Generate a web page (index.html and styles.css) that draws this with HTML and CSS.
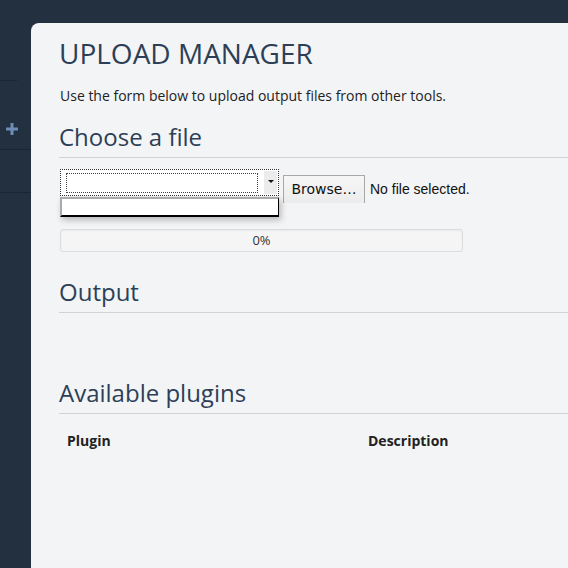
FILE: index.html
```html
<!DOCTYPE html>
<html>
<head>
<meta charset="utf-8">
<link rel="stylesheet" href="styles.css">
</head>
<body>
<div class="app">
  <aside class="sidebar">
    <div class="sb-top"></div>
    <div class="sb-add">
      <svg width="12" height="12" viewBox="0 0 12 12"><path d="M4.5 0h3v4.5H12v3H7.5V12h-3V7.5H0v-3h4.5z" fill="#6e8db4"/></svg>
    </div>
    <div class="sb-row"></div>
  </aside>
  <main class="panel">
    <h1 class="title">UPLOAD MANAGER</h1>
    <p class="intro">Use the form below to upload output files from other tools.</p>
    <h2 class="section">Choose a file</h2>
    <div class="file-row">
      <div class="select-wrap">
        <div class="select">
          <div class="select-inner"></div>
          <div class="select-arrow"><span class="caret"></span></div>
        </div>
        <div class="dropdown"></div>
      </div>
      <div class="browse">Browse…</div>
      <span class="nofile">No file selected.</span>
    </div>
    <div class="progress">0%</div>
    <h2 class="section output">Output</h2>
    <h2 class="section plugins">Available plugins</h2>
    <table class="plugins-table">
      <thead>
        <tr><th class="col-plugin">Plugin</th><th>Description</th></tr>
      </thead>
    </table>
  </main>
</div>
</body>
</html>
```
FILE: styles.css
```css
* { box-sizing: border-box; }
html, body { margin: 0; padding: 0; }
body {
  background: #233040;
  width: 568px;
  height: 568px;
  overflow: hidden;
  font-family: "Open Sans", sans-serif;
}
.app { display: flex; height: 568px; }
.sidebar {
  width: 31px;
  flex: none;
  display: flex;
  flex-direction: column;
}
.sb-top {
  height: 81px;
}
.sb-top::after {
  content: "";
  display: block;
  margin-top: 80px;
  width: 17px;
  height: 1px;
  background: #1a2531;
}
.sb-add {
  height: 69px;
  display: flex;
  align-items: flex-start;
  padding-left: 6px;
  padding-top: 42px;
  border-bottom: 1px solid #1a2531;
}
.sb-row {
  height: 43px;
  border-bottom: 1px solid #1a2531;
}
.panel {
  flex: 1;
  margin-top: 23px;
  background: #f3f4f6;
  border-top-left-radius: 8px;
  padding-left: 28px;
  color: #2c3e50;
}
.title {
  margin: 0;
  padding-top: 12px;
  font-size: 28px;
  font-weight: 400;
  line-height: 36px;
  color: #2d3f56;
}
.intro {
  margin: 16px 0 0 1px;
  font-size: 14px;
  line-height: 18px;
  color: #222;
}
.section {
  margin: 0;
  font-size: 24px;
  font-weight: 400;
  line-height: 30px;
  color: #2d3f56;
  border-bottom: 1px solid #cfd2d6;
  padding-bottom: 5px;
}
.intro + .section { margin-top: 17px; }
.file-row {
  display: flex;
  align-items: flex-start;
  margin-top: 11px;
  margin-left: 1px;
  height: 60px;
}
.select-wrap { width: 219px; position: relative; }
.select {
  height: 27px;
  border: 1px dotted #333;
  background: #fff;
  position: relative;
}
.select-inner {
  position: absolute;
  left: 5px;
  top: 3px;
  width: 192px;
  height: 20px;
  border: 1px dotted #444;
}
.select-arrow {
  position: absolute;
  right: 1px;
  top: 1px;
  bottom: 1px;
  width: 13px;
  background: #ececec;
  display: flex;
  align-items: center;
  justify-content: center;
}
.caret {
  width: 0; height: 0;
  border-left: 3px solid transparent;
  border-right: 3px solid transparent;
  border-top: 3px solid #111;
  margin-top: -2px;
}
.dropdown {
  margin-top: 1px;
  height: 20px;
  background: #fff;
  border-left: 2px solid #aaa;
  border-top: 2px solid #aaa;
  border-right: 1px solid #000;
  border-bottom: 2px solid #000;
  box-shadow: 2px 3px 6px rgba(0,0,0,0.25);
  width: 219px;
}
.browse {
  margin-left: 4px;
  margin-top: 6px;
  width: 82px;
  height: 28px;
  border: 1px solid #a8a8a8;
  border-bottom: 0;
  background: linear-gradient(#f6f6f6, #ececec);
  font-family: "DejaVu Sans", sans-serif;
  font-size: 14px;
  line-height: 26px;
  text-align: center;
  color: #111;
}
.nofile {
  margin-left: 5px;
  margin-top: 12px;
  font-family: "Liberation Sans", sans-serif;
  font-size: 14px;
  line-height: 16px;
  color: #111;
}
.progress {
  margin-left: 1px;
  width: 403px;
  height: 23px;
  border: 1px solid #dcdcdc;
  border-radius: 3px;
  background: #f5f5f5;
  text-align: center;
  font-size: 13px;
  line-height: 21px;
  color: #333;
  box-shadow: inset 0 1px 2px rgba(0,0,0,0.05);
}
.output { margin-top: 25px; }
.plugins { margin-top: 65px; }
.plugins-table {
  border-collapse: collapse;
  margin-top: 17px;
  width: 100%;
}
.plugins-table th {
  text-align: left;
  font-size: 14px;
  font-weight: 700;
  color: #222;
  padding: 0 8px;
  line-height: 20px;
}
.col-plugin { width: 301px; }
```
